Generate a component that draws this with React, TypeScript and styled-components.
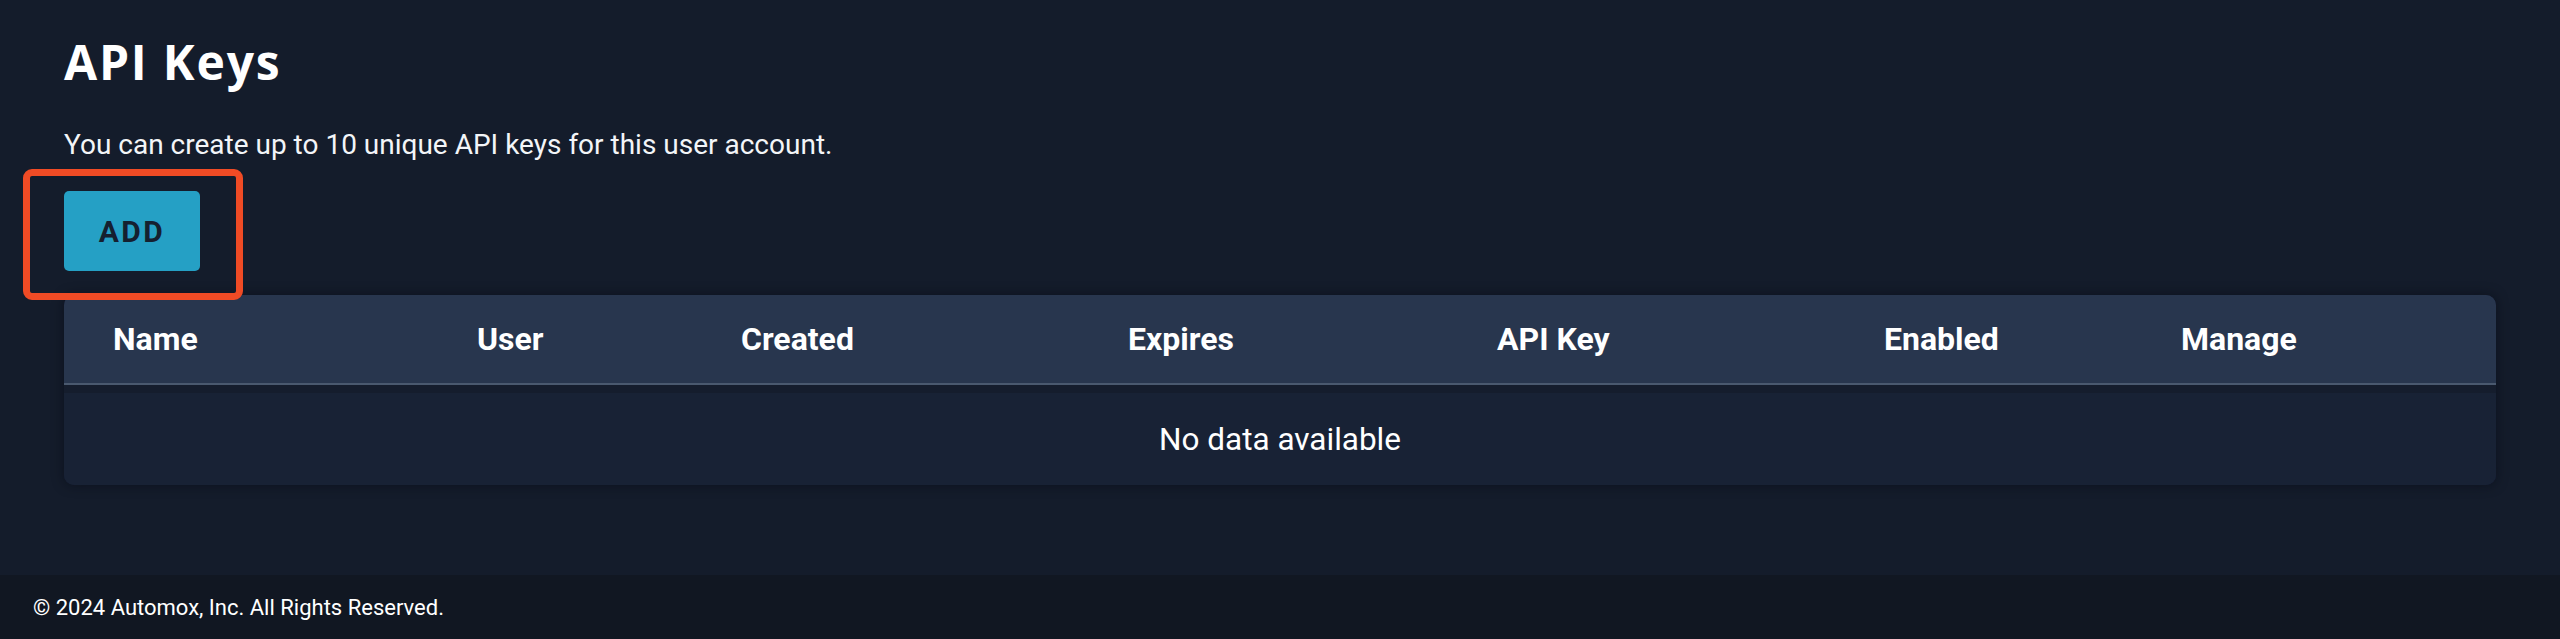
import React from "react";
import styled, { createGlobalStyle } from "styled-components";

const GlobalStyle = createGlobalStyle`
  html, body {
    margin: 0;
    padding: 0;
    background: #141c2b;
    font-family: Roboto, "Liberation Sans", sans-serif;
    color: #ffffff;
  }
  * { box-sizing: border-box; }
`;

const Page = styled.div`
  min-height: 100vh;
  display: flex;
  flex-direction: column;
`;

const Main = styled.main`
  flex: 1;
  background: #141c2b;
  padding: 32px 64px 88px 64px;
  display: flex;
  flex-direction: column;
`;

const Title = styled.h1`
  margin: 0;
  font-family: "Open Sans", Lato, sans-serif;
  font-weight: 700;
  font-size: 48px;
  line-height: 59px;
  color: #ffffff;
  letter-spacing: 1.8px;
`;

const Description = styled.p`
  margin: 36px 0 0 0;
  font-family: Roboto, sans-serif;
  font-size: 28px;
  line-height: 36px;
  color: #f3f5f8;
`;

const ButtonWrap = styled.div`
  position: relative;
  align-self: flex-start;
  margin-top: 28px;
`;

const Highlight = styled.div`
  position: absolute;
  left: -41px;
  top: -22px;
  right: -43px;
  bottom: -29px;
  border: 7px solid #f04b25;
  border-radius: 9px;
  pointer-events: none;
`;

const AddButton = styled.button`
  display: flex;
  align-items: center;
  justify-content: center;
  width: 136px;
  height: 80px;
  border: none;
  border-radius: 5px;
  background: #25a0c5;
  color: #152030;
  font-family: Roboto, sans-serif;
  font-weight: 700;
  font-size: 30px;
  letter-spacing: 2.4px;
  padding: 0;
  cursor: pointer;
`;

const Table = styled.div`
  margin-top: 24px;
  border-radius: 10px;
  overflow: hidden;
  background: #18223a;
  box-shadow: 0 0 12px rgba(6, 10, 18, 0.55);
`;

const cols = "364px 264px 387px 369px 387px 297px 1fr";

const HeaderRow = styled.div`
  display: grid;
  grid-template-columns: ${cols};
  height: 90px;
  align-items: center;
  background: #28364e;
  border-bottom: 2px solid #4a596f;
`;

const HeaderCell = styled.div`
  padding-left: 49px;
  font-family: Roboto, sans-serif;
  font-weight: 700;
  font-size: 32px;
  color: #ffffff;
  white-space: nowrap;
`;

const Band = styled.div`
  height: 8px;
  background: #151d2d;
`;

const EmptyRow = styled.div`
  height: 92px;
  display: flex;
  align-items: center;
  justify-content: center;
  background: #182235;
  font-family: Roboto, sans-serif;
  font-size: 31.5px;
  color: #ffffff;
`;

const Footer = styled.footer`
  height: 64px;
  background: #111722;
  display: flex;
  align-items: center;
  padding-left: 33px;
  font-family: Roboto, sans-serif;
  font-size: 22px;
  color: #ffffff;
`;

const headers = ["Name", "User", "Created", "Expires", "API Key", "Enabled", "Manage"];

export default function App() {
  return (
    <>
      <GlobalStyle />
      <Page>
        <Main>
          <Title>API Keys</Title>
          <Description>You can create up to 10 unique API keys for this user account.</Description>
          <ButtonWrap>
            <AddButton>ADD</AddButton>
            <Highlight />
          </ButtonWrap>
          <Table>
            <HeaderRow>
              {headers.map((h) => (
                <HeaderCell key={h}>{h}</HeaderCell>
              ))}
            </HeaderRow>
            <Band />
            <EmptyRow>No data available</EmptyRow>
          </Table>
        </Main>
        <Footer>© 2024 Automox, Inc. All Rights Reserved.</Footer>
      </Page>
    </>
  );
}
